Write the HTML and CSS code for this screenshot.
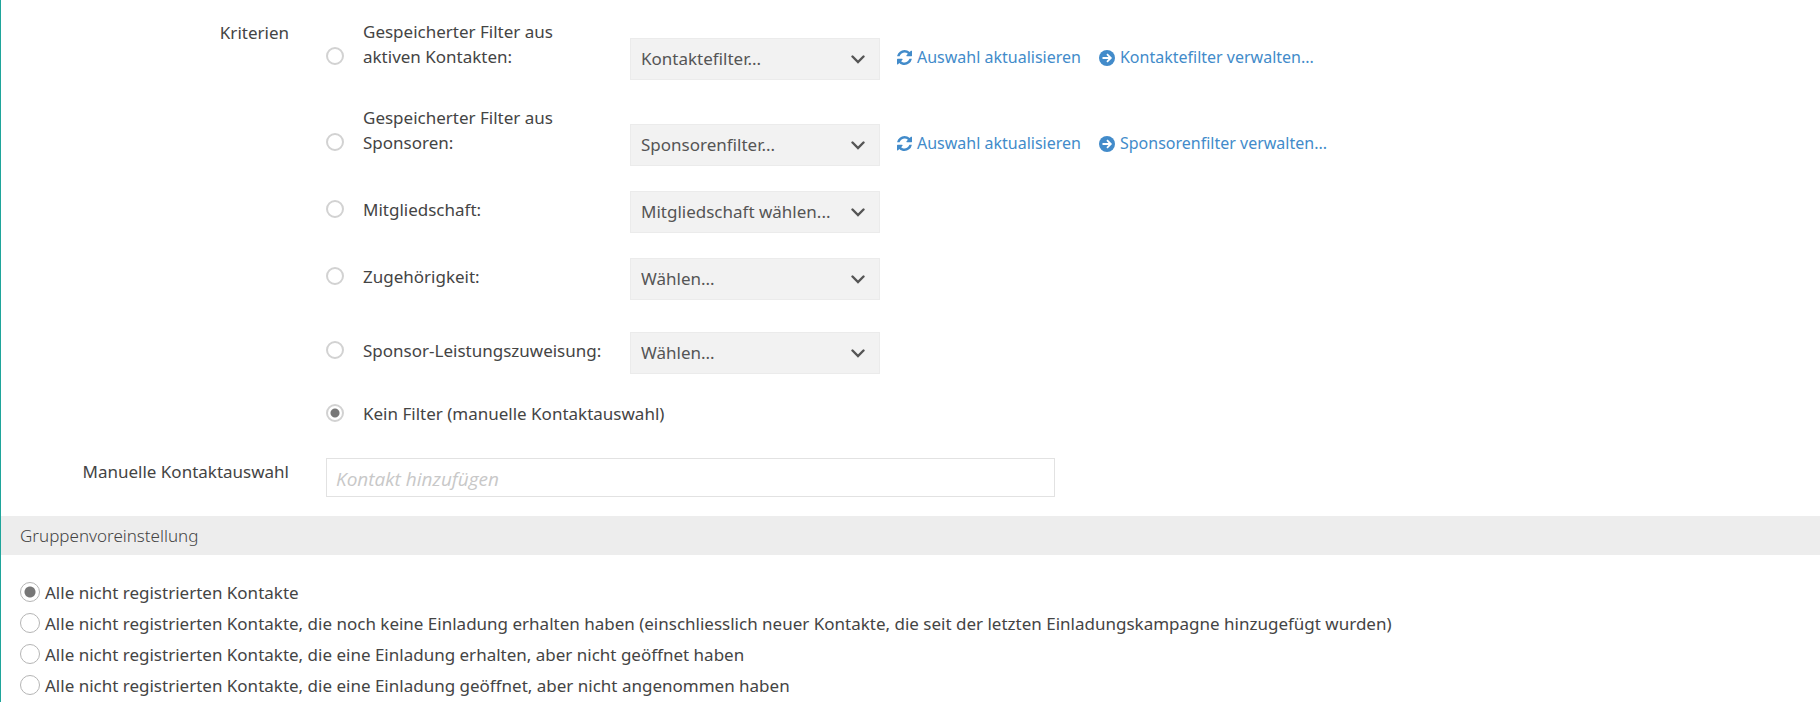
FILE: index.html
```
<!DOCTYPE html>
<html lang="de">
<head>
    <meta charset="UTF-8">
    <meta name="viewport" content="width=device-width, initial-scale=1.0">
    <title>Kontaktauswahl</title>
    <link rel="stylesheet" href="styles.css">
</head>
<body>
    <svg class="sprite" aria-hidden="true">
        <symbol id="icon-chevron" viewBox="0 0 14 9">
            <path d="M1.5 1.5 L7 7 L12.5 1.5" fill="none" stroke="currentColor" stroke-width="2.4" stroke-linecap="round"/>
        </symbol>
        <symbol id="icon-refresh" viewBox="0 0 1536 1536">
            <path fill="currentColor" d="M1511 928q0 5-1 7-64 268-268 434.500T764 1536q-146 0-282.500-55T238 1324l-129 129q-19 19-45 19t-45-19-19-45V960q0-26 19-45t45-19h448q26 0 45 19t19 45-19 45l-137 137q71 66 161 102t187 36q134 0 250-65t186-179q11-17 53-117 8-23 30-23h192q13 0 22.500 9.500t9.500 22.500zm25-800v448q0 26-19 45t-45 19h-448q-26 0-45-19t-19-45 19-45l138-138Q969 256 768 256q-134 0-250 65T332 500q-11 17-53 117-8 23-30 23H50q-13 0-22.500-9.500T18 608v-7q65-268 270-434.500T768 0q146 0 284 55.500T1297 212l130-129q19-19 45-19t45 19 19 45z"/>
        </symbol>
        <symbol id="icon-arrow" viewBox="0 0 16 16">
            <circle cx="8" cy="8" r="8" fill="currentColor"/>
            <path d="M3.500 8 H11.500 M8 4.200 L11.800 8 L8 11.800" fill="none" stroke="#fff" stroke-width="1.800"/>
        </symbol>
    </svg>

    <form class="page">
        <div class="form-row">
            <span class="form-label" id="criteriaLabel">Kriterien</span>
            <div class="options" role="radiogroup" aria-labelledby="criteriaLabel">
                <div class="option">
                    <input type="radio" name="filter" id="filterContacts">
                    <label for="filterContacts">Gespeicherter Filter aus aktiven Kontakten:</label>
                    <div class="select">
                        <select aria-label="Kontaktefilter"><option>Kontaktefilter...</option></select>
                        <svg><use href="#icon-chevron"/></svg>
                    </div>
                    <div class="links">
                        <a href="#"><svg class="refresh"><use href="#icon-refresh"/></svg>Auswahl aktualisieren</a>
                        <a href="#"><svg><use href="#icon-arrow"/></svg>Kontaktefilter verwalten...</a>
                    </div>
                </div>
                <div class="option">
                    <input type="radio" name="filter" id="filterSponsors">
                    <label for="filterSponsors">Gespeicherter Filter aus Sponsoren:</label>
                    <div class="select">
                        <select aria-label="Sponsorenfilter"><option>Sponsorenfilter...</option></select>
                        <svg><use href="#icon-chevron"/></svg>
                    </div>
                    <div class="links">
                        <a href="#"><svg class="refresh"><use href="#icon-refresh"/></svg>Auswahl aktualisieren</a>
                        <a href="#"><svg><use href="#icon-arrow"/></svg>Sponsorenfilter verwalten...</a>
                    </div>
                </div>
                <div class="option">
                    <input type="radio" name="filter" id="filterMembership">
                    <label for="filterMembership">Mitgliedschaft:</label>
                    <div class="select">
                        <select aria-label="Mitgliedschaft"><option>Mitgliedschaft wählen...</option></select>
                        <svg><use href="#icon-chevron"/></svg>
                    </div>
                </div>
                <div class="option">
                    <input type="radio" name="filter" id="filterAffiliation">
                    <label for="filterAffiliation">Zugehörigkeit:</label>
                    <div class="select">
                        <select aria-label="Zugehörigkeit"><option>Wählen...</option></select>
                        <svg><use href="#icon-chevron"/></svg>
                    </div>
                </div>
                <div class="option option-spaced">
                    <input type="radio" name="filter" id="filterBenefit">
                    <label for="filterBenefit">Sponsor-Leistungszuweisung:</label>
                    <div class="select">
                        <select aria-label="Sponsor-Leistungszuweisung"><option>Wählen...</option></select>
                        <svg><use href="#icon-chevron"/></svg>
                    </div>
                </div>
                <div class="option">
                    <input type="radio" name="filter" id="filterNone" checked>
                    <label class="wide" for="filterNone">Kein Filter (manuelle Kontaktauswahl)</label>
                </div>
            </div>
        </div>

        <div class="form-row">
            <label class="form-label" for="manualContact">Manuelle Kontaktauswahl</label>
            <input type="text" class="text-input" id="manualContact" placeholder="Kontakt hinzufügen">
        </div>

        <h2 class="section-title">Gruppenvoreinstellung</h2>

        <div class="group-options">
            <label><input type="radio" name="group" checked>Alle nicht registrierten Kontakte</label>
            <label><input type="radio" name="group">Alle nicht registrierten Kontakte, die noch keine Einladung erhalten haben (einschliesslich neuer Kontakte, die seit der letzten Einladungskampagne hinzugefügt wurden)</label>
            <label><input type="radio" name="group">Alle nicht registrierten Kontakte, die eine Einladung erhalten, aber nicht geöffnet haben</label>
            <label><input type="radio" name="group">Alle nicht registrierten Kontakte, die eine Einladung geöffnet, aber nicht angenommen haben</label>
        </div>
    </form>
</body>
</html>
```
FILE: styles.css
```
* {
    box-sizing: border-box;
}
body {
    margin: 0;
    background: #fff;
    color: #444;
    font-family: 'Noto Sans', 'Open Sans', sans-serif;
    font-size: 17px;
    line-height: 25px;
}
.sprite {
    display: none;
}
.page {
    min-height: 100vh;
    padding-top: 19px;
    border-left: 1px solid #1fa59b;
}
.form-row {
    display: grid;
    grid-template-columns: 288px minmax(0, 1fr);
    column-gap: 37px;
    margin-bottom: 19px;
}
.form-label {
    padding-top: 1px;
    text-align: right;
}

/* Filter criteria */
.options {
    display: flex;
    flex-direction: column;
    gap: 25px;
    padding-bottom: 2px;
}
.option {
    display: grid;
    grid-template-columns: 18px 286px 250px 1fr;
    align-items: end;
    min-height: 38px;
}
.option-spaced {
    margin-top: 7px;
}
.option label {
    padding: 0 36px 11px 19px;
}
.option-spaced label {
    padding-right: 0;
}
.option label.wide {
    grid-column: 2 / -1;
}
input[type="radio"] {
    appearance: none;
    flex: none;
    width: 18px;
    height: 18px;
    margin: 0 0 15px;
    border: 2px solid #d2d2d2;
    border-radius: 50%;
    background: #fff;
}
input[type="radio"]:checked {
    background: radial-gradient(circle, #777 0, #777 4px, #fff 5px);
}
.select {
    position: relative;
}
.select select {
    appearance: none;
    display: block;
    width: 100%;
    height: 42px;
    padding: 0 40px 2px 10px;
    border: 1px solid #ebebeb;
    border-radius: 0;
    background: #f2f2f2;
    color: #555;
    font: inherit;
}
.select svg {
    position: absolute;
    top: 17px;
    right: 15px;
    width: 14px;
    height: 9px;
    color: #555;
    pointer-events: none;
}
.links {
    display: flex;
    gap: 18px;
    margin-left: 17px;
    padding-bottom: 10px;
    font-size: 16px;
}
.links a {
    display: flex;
    align-items: center;
    gap: 5px;
    color: #428bca;
    text-decoration: none;
    white-space: nowrap;
}
.links svg {
    width: 16px;
    height: 16px;
}
.links .refresh {
    width: 15px;
    height: 15px;
}

/* Manual selection */
.text-input {
    width: 100%;
    max-width: 729px;
    height: 39px;
    padding: 2px 9px 0;
    border: 1px solid #e2e2e2;
    border-radius: 0;
    color: #444;
    font-family: 'Open Sans', sans-serif;
    font-size: 19px;
}
.text-input::placeholder {
    color: #c8c8c8;
    font-style: italic;
    opacity: 1;
}

/* Group defaults */
.section-title {
    margin: 0;
    padding: 7px 19px;
    background: #ededed;
    font-size: 17px;
    font-weight: 300;
}
.group-options {
    display: flex;
    flex-direction: column;
    gap: 6px;
    padding: 25px 19px 0;
}
.group-options label {
    display: flex;
    align-items: center;
    gap: 5px;
}
.group-options input[type="radio"] {
    width: 20px;
    height: 20px;
    margin: 0 0 2px;
    border: 1px solid #b5b5b5;
}
.group-options input[type="radio"]:checked {
    background: radial-gradient(circle, #777 0, #777 5px, #fff 6px);
}
```
